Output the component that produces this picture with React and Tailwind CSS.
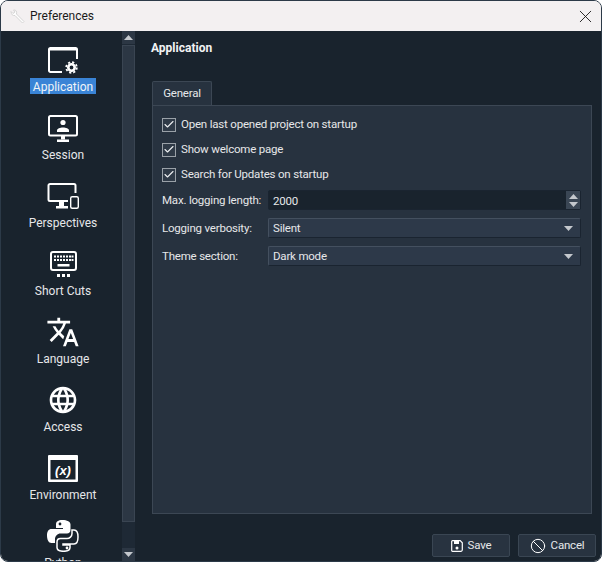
import React from 'react';
import { X, Check, Ban } from 'lucide-react';
import { MdTranslate, MdLanguage } from 'react-icons/md';

const AppIcon = () => (
  <svg width="30" height="27" viewBox="0 0 30 27" fill="none">
    <path d="M14 25H2.500A1.500 1.500 0 0 1 1 23.500V2.500A1.500 1.500 0 0 1 2.500 1h25A1.500 1.500 0 0 1 29 2.500V12" stroke="white" strokeWidth="2" />
    <rect x="1" y="1" width="28" height="2.500" fill="white" />
    <circle cx="23.500" cy="20.500" r="3.200" stroke="white" strokeWidth="2.600" />
    <circle cx="23.500" cy="20.500" r="5.300" stroke="white" strokeWidth="1.800" strokeDasharray="2.200 1.960" />
  </svg>
);

const SessionIcon = () => (
  <svg width="30" height="27" viewBox="0 0 30 27" fill="none">
    <rect x="1" y="1" width="28" height="19.500" rx="1.500" stroke="white" strokeWidth="2" />
    <circle cx="15" cy="7.500" r="2.600" fill="white" />
    <path d="M9 17v-1.500c0-2 3-3 6-3s6 1 6 3V17z" fill="white" />
    <rect x="13" y="21" width="4" height="3.500" fill="white" />
    <rect x="9" y="24.500" width="12" height="2.500" fill="white" />
  </svg>
);

const PerspectivesIcon = () => (
  <svg width="32" height="26" viewBox="0 0 32 26" fill="none">
    <path d="M21 18H3a1.500 1.500 0 0 1-1.500-1.500V2.500A1.500 1.500 0 0 1 3 1h24a1.500 1.500 0 0 1 1.500 1.500V10" stroke="white" strokeWidth="2" />
    <rect x="12" y="18" width="5" height="5" fill="white" />
    <rect x="9" y="23" width="12" height="2.500" fill="white" />
    <rect x="23.700" y="13.700" width="7.600" height="11.600" rx="1.500" stroke="white" strokeWidth="1.400" />
  </svg>
);

const KeyboardIcon = () => (
  <svg width="27" height="26" viewBox="0 0 27 26" fill="none">
    <rect x="1" y="1" width="25" height="18" rx="2" stroke="white" strokeWidth="2" />
    <g fill="white">
      {[4, 7, 10, 13, 16, 19, 21.500].map((x) => (
        <rect key={x} x={x} y="4.500" width="2" height="2" />
      ))}
      {[4, 7, 10, 13, 16, 19, 21.500].map((x) => (
        <rect key={x} x={x} y="8" width="2" height="2" />
      ))}
      <rect x="7.500" y="13" width="12" height="2.500" />
      <rect x="7" y="23" width="3" height="3" />
      <rect x="12" y="23" width="3" height="3" />
      <rect x="17" y="23" width="3" height="3" />
    </g>
  </svg>
);

const EnvIcon = () => (
  <svg width="30" height="27" viewBox="0 0 30 27">
    <path fillRule="evenodd" fill="white" d="M1 0h28a1 1 0 0 1 1 1v25a1 1 0 0 1-1 1H1a1 1 0 0 1-1-1V1a1 1 0 0 1 1-1zM2.500 5v19.500h25V5z" />
    <text x="15" y="19.500" textAnchor="middle" fill="white" fontSize="13" fontWeight="700" fontStyle="italic" fontFamily="'Liberation Sans', sans-serif">(x)</text>
  </svg>
);

const PythonIcon = () => (
  <svg width="32" height="32" viewBox="0 0 32 32" fill="none">
    <path fill="white" d="M15.500 0C11 0 9 1.500 9 4.500V8h7v1H4.500C1.500 9 0 11.500 0 15.500S1.500 23 4.500 23H8v-4c0-3 2.500-5.500 5.500-5.500H20c2 0 3.500-1.500 3.500-3.500V4.500C23.500 1.500 20 0 15.500 0z" />
    <circle cx="13" cy="4" r="1.400" fill="#19232d" />
    <path stroke="white" strokeWidth="1.500" d="M25 10v3.500c0 3-2.500 5-5 5h-6.500c-2 0-3.500 1.500-3.500 3.500v5.500c0 2.500 3 3.800 6.500 3.800s6.500-1.300 6.500-3.800V25h-7v-1h11c2.500 0 4-2.500 4-7s-1.500-7-4-7z" />
    <circle cx="20" cy="28" r="1.400" fill="white" />
  </svg>
);

const items = [
  { label: 'Application', icon: <AppIcon />, selected: true },
  { label: 'Session', icon: <SessionIcon /> },
  { label: 'Perspectives', icon: <PerspectivesIcon /> },
  { label: 'Short Cuts', icon: <KeyboardIcon /> },
  { label: 'Language', icon: <MdTranslate size={34} color="white" /> },
  { label: 'Access', icon: <MdLanguage size={32} color="white" /> },
  { label: 'Environment', icon: <EnvIcon /> },
  { label: 'Python', icon: <PythonIcon /> },
];

const SidebarItem = ({ item }) => (
  <div className="flex flex-col items-center h-[68px] shrink-0">
    <div className="h-[34px] flex items-center justify-center">{item.icon}</div>
    <div
      className={`mt-px px-[3px] h-4 leading-[18px] text-[12px] ${
        item.selected ? 'bg-[#3a84d6] text-[#f0f4f8]' : 'text-[#e6e7e9]'
      }`}
    >
      {item.label}
    </div>
  </div>
);

const CheckRow = ({ label }) => (
  <div className="flex items-center h-[25px] gap-[5px]">
    <div className="w-[14px] h-[14px] border border-[#9aa1a8] bg-[#2f3a47] flex items-center justify-center">
      <Check size={13} strokeWidth={2.200} className="text-[#eceef0]" />
    </div>
    <span>{label}</span>
  </div>
);

const Triangle = ({ up }) => (
  <svg width="9" height="5" viewBox="0 0 9 5" className={up ? 'rotate-180' : ''}>
    <path d="M0 0h9L4.500 5z" fill="#c4c8cd" />
  </svg>
);

const FormRow = ({ label, children }) => (
  <div className="flex items-center">
    <div className="w-[106px] shrink-0 whitespace-nowrap pt-px">{label}</div>
    {children}
  </div>
);

const Select = ({ value }) => (
  <div className="flex-1 h-5 flex items-center justify-between pl-[4px] pr-[7px] rounded-[2px] bg-[#2d3949] border border-[#1a2430] border-t-[#44505f] border-l-[#44505f]">
    <span className="pt-px">{value}</span>
    <Triangle />
  </div>
);

const Button = ({ icon, label }) => (
  <div className="w-[78px] h-[23px] flex items-center justify-center gap-[5px] rounded-[2px] bg-[#283340] border border-[#3a4653] text-[#e6e8ea]">
    {icon}
    <span>{label}</span>
  </div>
);

export default function App() {
  return (
    <div
      className="w-[603px] h-[563px] bg-white overflow-hidden"
      style={{ fontFamily: "Roboto, 'Noto Sans', sans-serif" }}
    >
      <div className="w-[602px] h-[562px] flex flex-col rounded-[8px] overflow-hidden border border-[#2c3a48] text-[11.500px] tracking-[-0.2px] text-[#e6e7e9]">
        {/* Title bar */}
        <div className="h-[30px] shrink-0 bg-[#f3f0f1] flex items-center justify-between pl-[9px] pr-[5px] text-[#1a1a1a]">
          <div className="flex items-center gap-[5px] text-[12px] tracking-normal">
            <svg width="15" height="15" viewBox="0 0 15 15" fill="none">
              <path d="M1 2.500 3 4.500l2-1.500-1.500-2C6 .5 7 2.500 6.500 5L14 12.500 12.500 14 5 6.500C3 7 1 5.500 1 2.500z" fill="#fdfdfd" stroke="#d5d5d5" strokeWidth="1" />
            </svg>
            <span>Preferences</span>
          </div>
          <X size={21} strokeWidth={1} className="text-[#111]" />
        </div>

        <div className="flex-1 flex bg-[#19232d] min-h-0">
          {/* Sidebar */}
          <div className="w-[121px] shrink-0 overflow-hidden pl-[3px] pt-[12px] flex flex-col tracking-normal">
            {items.map((item) => (
              <SidebarItem key={item.label} item={item} />
            ))}
          </div>

          {/* Scrollbar */}
          <div className="w-[13px] shrink-0 flex flex-col bg-[#1e2935] mr-[1px]">
            <div className="h-[13px] bg-[#2c3744] flex items-center justify-center">
              <Triangle up />
            </div>
            <div className="h-[477px] mt-[1px] bg-[#2c3744] border border-[#3a4552]" />
            <div className="flex-1" />
            <div className="h-[13px] bg-[#2c3744] flex items-center justify-center">
              <Triangle />
            </div>
          </div>

          {/* Content */}
          <div className="flex-1 min-w-0 flex flex-col pl-[15px] pr-[5px]">
            <div className="pt-[8px] h-[50px] shrink-0 font-bold text-[12px] tracking-normal text-[#f2f3f4]">Application</div>
            <div className="flex pl-px">
              <div className="w-[60px] h-[24px] flex items-center justify-center rounded-t-[2px] bg-[#27323f] border border-b-0 border-[#3c4754] text-[#e6e8ea]">
                General
              </div>
            </div>
            <div className="h-[409px] w-[440px] ml-px shrink-0 bg-[#27323f] border border-[#3c4754] pl-[9px] pr-[10px] pt-[6px]">
              <CheckRow label="Open last opened project on startup" />
              <CheckRow label="Show welcome page" />
              <CheckRow label="Search for Updates on startup" />
              <div className="mt-[3px] flex flex-col gap-2">
                <FormRow label="Max. logging length:">
                  <div className="flex-1 h-5 flex items-stretch rounded-[2px] bg-[#19232d] border border-[#1a2430]">
                    <span className="flex-1 pl-[4px] leading-[20px]">2000</span>
                    <div className="w-[14px] bg-[#3a4654] flex flex-col items-center justify-center gap-[3px]">
                      <Triangle up />
                      <Triangle />
                    </div>
                  </div>
                </FormRow>
                <FormRow label="Logging verbosity:">
                  <Select value="Silent" />
                </FormRow>
                <FormRow label="Theme section:">
                  <Select value="Dark mode" />
                </FormRow>
              </div>
            </div>
            <div className="flex justify-end gap-2 mt-[20px]">
              <Button
                icon={
                  <svg width="12" height="12" viewBox="0 0 12 12" fill="none">
                    <path d="M1.500.7h7.700l2.100 2.100v7a1.500 1.500 0 0 1-1.500 1.500H1.500A.8.8 0 0 1 .7 10.500V1.500A.8.8 0 0 1 1.500.7z" stroke="white" strokeWidth="1.200" />
                    <rect x="3" y="1" width="5" height="3" fill="white" />
                    <circle cx="6" cy="8" r="1.500" fill="white" />
                  </svg>
                }
                label="Save"
              />
              <Button icon={<Ban size={16} strokeWidth={1.500} className="text-white" />} label="Cancel" />
            </div>
          </div>
        </div>
      </div>
    </div>
  );
}
